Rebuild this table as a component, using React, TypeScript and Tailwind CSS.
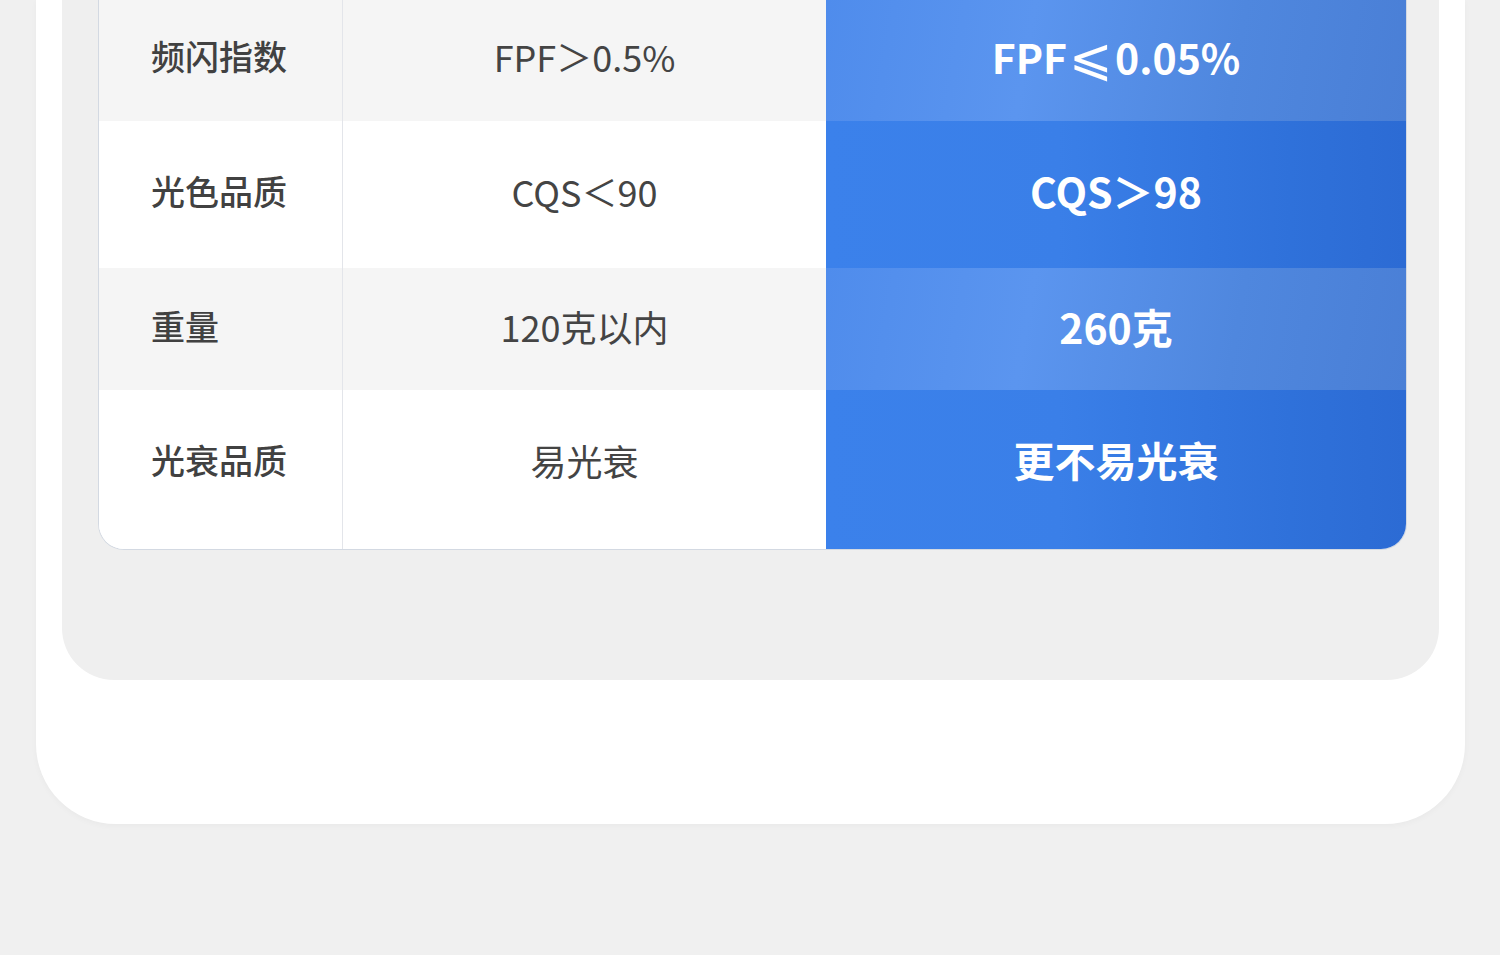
import React from 'react';

type Row = {
    label: string;
    normal: string;
    ours: React.ReactNode;
    height: string;
    shaded: boolean;
};

const rows: Row[] = [
    {
        label: '频闪指数',
        normal: 'FPF＞0.5%',
        ours: (
            <>
                FPF<span className="relative -top-[3px] mx-[2px] text-[52px] font-normal leading-none">⩽</span>0.05%
            </>
        ),
        height: 'h-[121px] pb-[9px]',
        shaded: true,
    },
    { label: '光色品质', normal: 'CQS＜90', ours: 'CQS＞98', height: 'h-[147px] pb-[8px]', shaded: false },
    { label: '重量', normal: '120克以内', ours: '260克', height: 'h-[122px] pb-[6px]', shaded: true },
    { label: '光衰品质', normal: '易光衰', ours: '更不易光衰', height: 'h-[159px] pb-[20px]', shaded: false },
];

const font = { fontFamily: '"Noto Sans CJK SC", "Noto Sans", sans-serif' };

export default function App() {
    return (
        <div className="min-h-[955px] w-full bg-[#f0f0f0]" style={font}>
            <div className="ml-[36px] w-[1429px] rounded-b-[80px] bg-white pb-[144px] shadow-[0_2px_6px_rgba(0,0,0,0.03)]">
                <div className="mx-[26px] rounded-b-[52px] bg-[#efefef] pb-[130px] pl-[36px] pr-[32px]">
                    <ComparisonTable />
                </div>
            </div>
        </div>
    );
}

function ComparisonTable() {
    return (
        <div className="overflow-hidden rounded-b-[26px] border-x border-b border-[#d3d9e2] bg-white">
            {rows.map((row) => (
                <div key={row.label} className="flex">
                    <div
                        className={`flex w-[244px] items-center border-r border-[#e3e5ea] pl-[52px] text-[34px] font-medium leading-none text-[#414141] ${row.height} ${row.shaded ? 'bg-[#f5f5f5]' : 'bg-white'}`}
                    >
                        {row.label}
                    </div>
                    <div
                        className={`flex w-[483px] items-center justify-center text-[36px] leading-none text-[#444444] ${row.height} ${row.shaded ? 'bg-[#f5f5f5]' : 'bg-white'}`}
                    >
                        {row.normal}
                    </div>
                    <div
                        className={`flex flex-1 items-center justify-center text-[41px] font-bold leading-none text-white ${row.height} ${
                            row.shaded
                                ? 'bg-[linear-gradient(100deg,#4f8cec_0%,#5b95ef_35%,#4f87de_70%,#4a7fd6_100%)]'
                                : 'bg-[linear-gradient(90deg,#3b81eb_0%,#3a7fe8_40%,#2f71da_80%,#2c6bd4_100%)]'
                        }`}
                    >
                        {row.ours}
                    </div>
                </div>
            ))}
        </div>
    );
}
